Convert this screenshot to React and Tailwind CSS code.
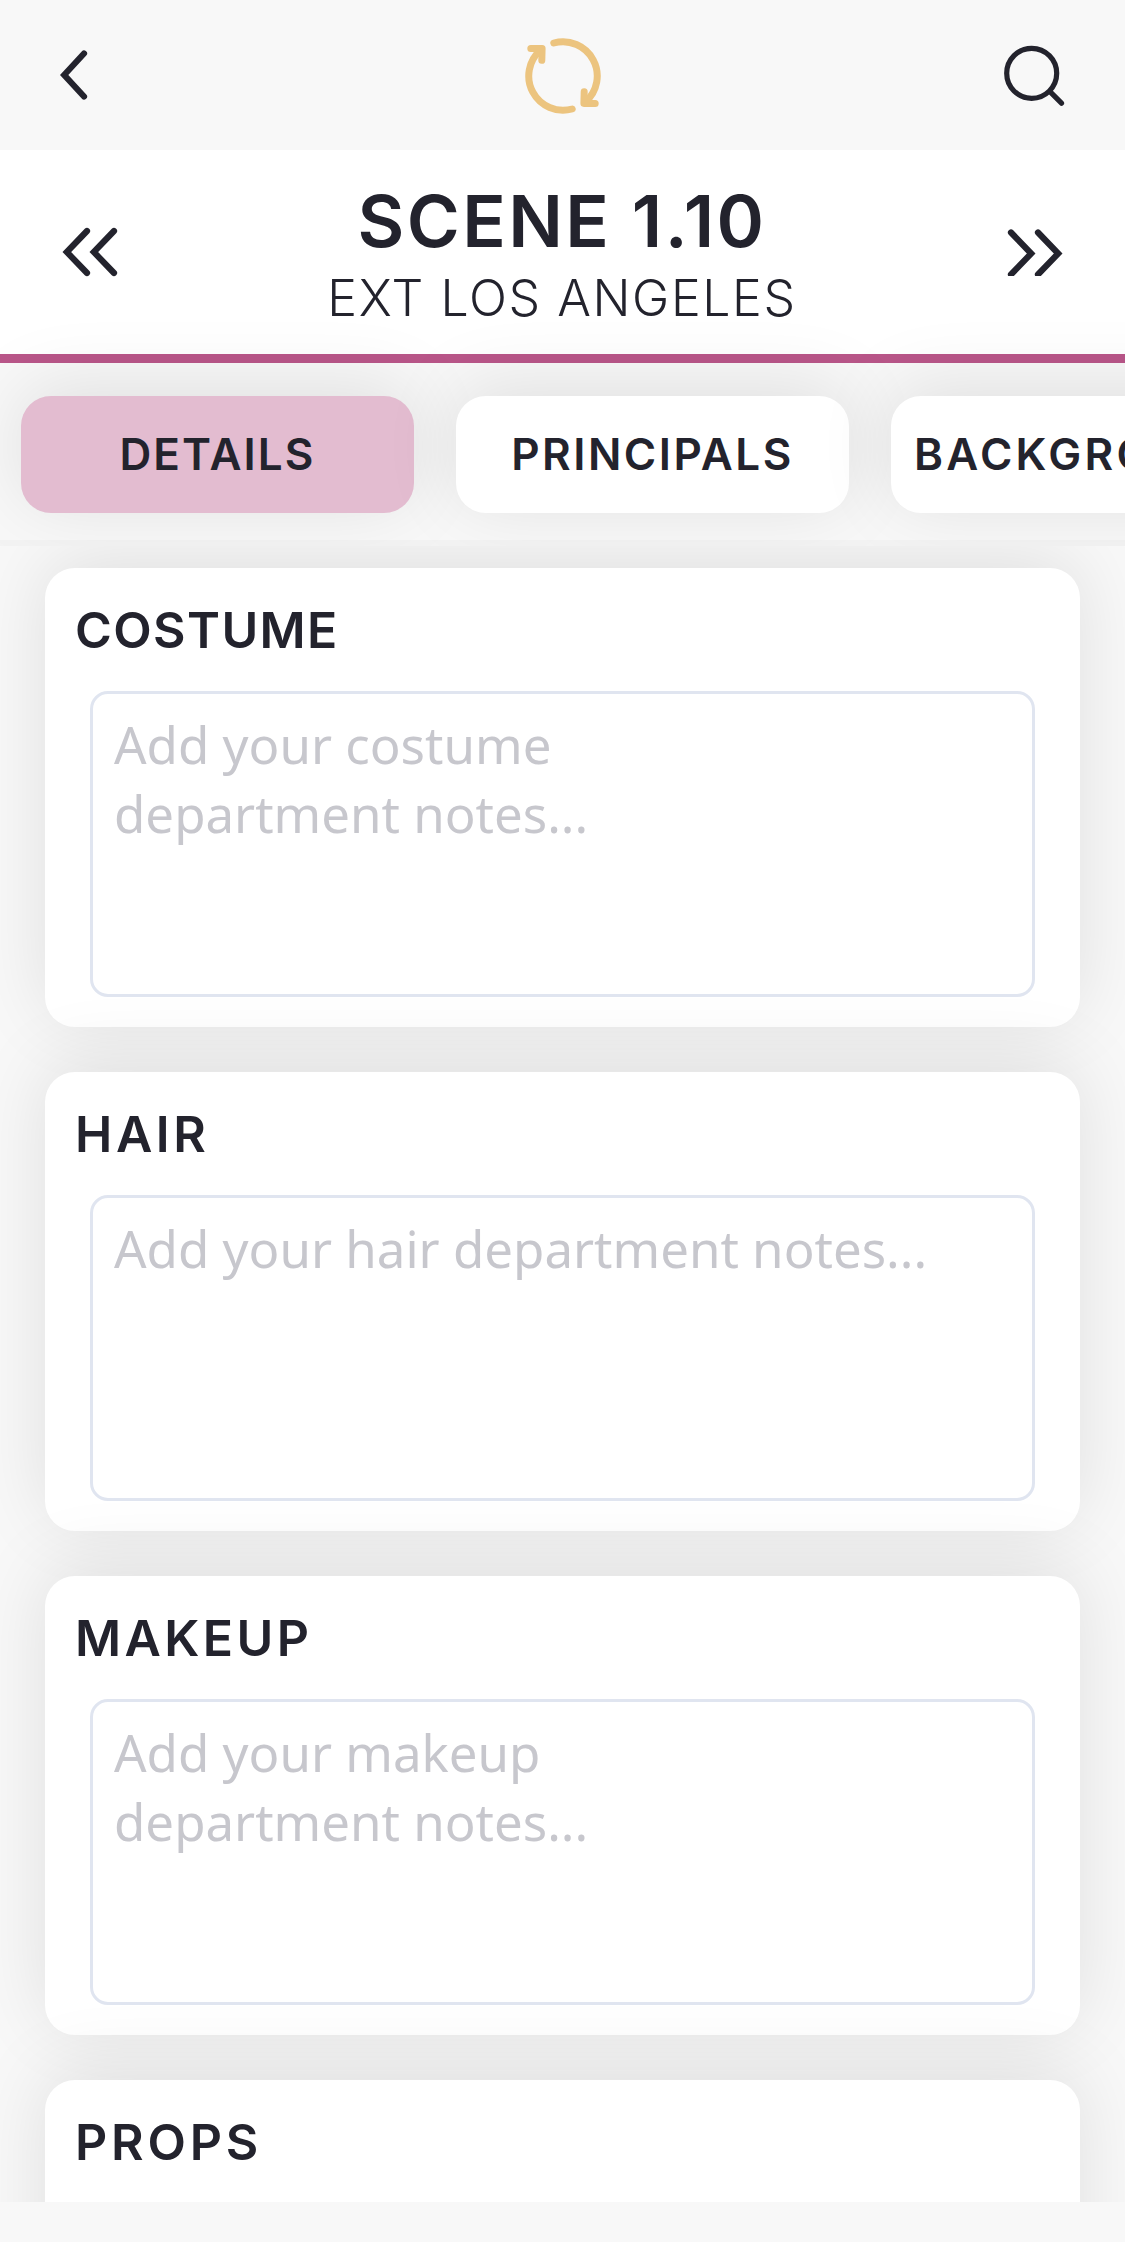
import { useState } from 'react'

const tabs = [
  { id: 'details', label: 'DETAILS', text: 'tracking-[2.1px]' },
  { id: 'principals', label: 'PRINCIPALS', text: 'tracking-[2.5px]' },
  { id: 'background', label: 'BACKGROUND', text: 'tracking-[3.3px]' },
]

const departments = [
  { id: 'costume', title: 'COSTUME', text: 'tracking-[1.4px]', placeholder: 'Add your costume\ndepartment notes...' },
  { id: 'hair', title: 'HAIR', text: 'tracking-[3.6px]', placeholder: 'Add your hair department notes...' },
  { id: 'makeup', title: 'MAKEUP', text: 'tracking-[3.4px]', placeholder: 'Add your makeup\ndepartment notes...' },
  { id: 'props', title: 'PROPS', text: 'tracking-[3.8px]', placeholder: 'Add your props\ndepartment notes...' },
]

function BackIcon() {
  return (
    <svg width="30" height="54" viewBox="0 0 30 54" fill="none" stroke="currentColor" strokeWidth="6.2" strokeLinecap="round">
      <path d="M24 5.5 L4.2 27 L24 48.5" />
    </svg>
  )
}

function SyncIcon() {
  return (
    <svg width="76" height="76" viewBox="0 0 76 76" fill="none" stroke="#ecc47f" strokeWidth="7" strokeLinecap="round" strokeLinejoin="round">
      <path d="M28.8 5 A34.3 34.3 0 0 1 60.5 63.9" />
      <path d="M59.2 53.7 L58.9 65.4 H70.2 M60 64.5 L62.5 61" />
      <path d="M47.2 71 A34.3 34.3 0 0 1 15.5 12.1" />
      <path d="M16.8 22.3 L17.1 10.6 H5.8 M16 11.5 L13.5 15" />
    </svg>
  )
}

function SearchIcon() {
  return (
    <svg width="62" height="62" viewBox="0 0 62 62" fill="none" stroke="currentColor" strokeWidth="5.2" strokeLinecap="round">
      <circle cx="28.7" cy="29.3" r="25" />
      <path d="M47 47.6 L58.5 59.2" />
    </svg>
  )
}

function PrevIcon() {
  return (
    <svg width="56" height="50" viewBox="0 0 56 50" fill="none" stroke="currentColor" strokeWidth="6.2" strokeLinecap="round">
      <path d="M25 4 L4.8 25 L25 46 M52 4 L31.8 25 L52 46" />
    </svg>
  )
}

function NextIcon() {
  return (
    <svg width="56" height="47" viewBox="0 0 56 47" fill="none" stroke="currentColor" strokeWidth="6.2" strokeLinecap="round">
      <path d="M4 3.5 L24.2 24.5 L4 45.5 M31 3.5 L51.2 24.5 L31 45.5" />
    </svg>
  )
}

export default function App() {
  const [active, setActive] = useState('details')
  const [notes, setNotes] = useState({})

  return (
    <div className="flex h-[2242px] w-[1125px] flex-col overflow-hidden bg-[#f8f8f8] font-['Inter',sans-serif] text-[#23232d]">
      <header className="grid h-[150px] shrink-0 grid-cols-[1fr_auto_1fr] items-center px-[60px]">
        <button className="justify-self-start"><BackIcon /></button>
        <button className="pt-px"><SyncIcon /></button>
        <button className="justify-self-end"><SearchIcon /></button>
      </header>

      <section className="flex h-[213px] shrink-0 items-center justify-between border-b-[9px] border-[#b95689] bg-white px-[62px]">
        <button><PrevIcon /></button>
        <div className="flex flex-col items-center pt-[3px] pr-px whitespace-nowrap">
          <h1 className="text-[72px] leading-[88px] font-semibold tracking-[2.4px]">SCENE 1.10</h1>
          <p className="text-[50px] leading-[66px] font-[350] tracking-[1.6px]">EXT LOS ANGELES</p>
        </div>
        <button><NextIcon /></button>
      </section>

      <nav className="relative flex h-[183px] shrink-0 gap-[42px] border-b-[6px] border-black/[0.02] pt-[33px] pl-[21px]">
        {tabs.map((tab) => (
          <button
            key={tab.id}
            onClick={() => setActive(tab.id)}
            className={`h-[117px] w-[393px] shrink-0 rounded-[30px] pb-[2px] text-[44px] font-semibold whitespace-nowrap shadow-[0_-9px_76px_rgba(0,0,0,0.1)] ${tab.text} ${
              active === tab.id ? 'bg-[#e3bcd0]' : 'bg-white'
            }`}
          >
            {tab.label}
          </button>
        ))}
      </nav>

      <main className="relative flex min-h-0 flex-1 flex-col gap-[45px] overflow-hidden bg-[#f8f8f8] px-[45px] pt-[22px]">
        {departments.map((dept) => (
          <section
            key={dept.id}
            className="relative h-[459px] shrink-0 rounded-[30px] bg-white px-[45px] pt-[32px] shadow-[0_-9px_76px_rgba(0,0,0,0.1)]"
          >
            <h2 className={`-ml-[15px] h-[91px] text-[50px] leading-[60px] font-semibold ${dept.text}`}>{dept.title}</h2>
            <textarea
              value={notes[dept.id] || ''}
              onChange={(e) => setNotes({ ...notes, [dept.id]: e.target.value })}
              placeholder={dept.placeholder}
              className="block h-[306px] w-full resize-none rounded-[18px] border-[3px] border-[#e0e5f0] px-[21px] pt-[16px] font-['Noto_Sans',sans-serif] text-[51px] leading-[69px] placeholder:text-[#c7c7cd] focus:outline-none"
            />
          </section>
        ))}
      </main>

      <footer className="relative h-[40px] shrink-0 bg-[#f8f8f8]" />
    </div>
  )
}
